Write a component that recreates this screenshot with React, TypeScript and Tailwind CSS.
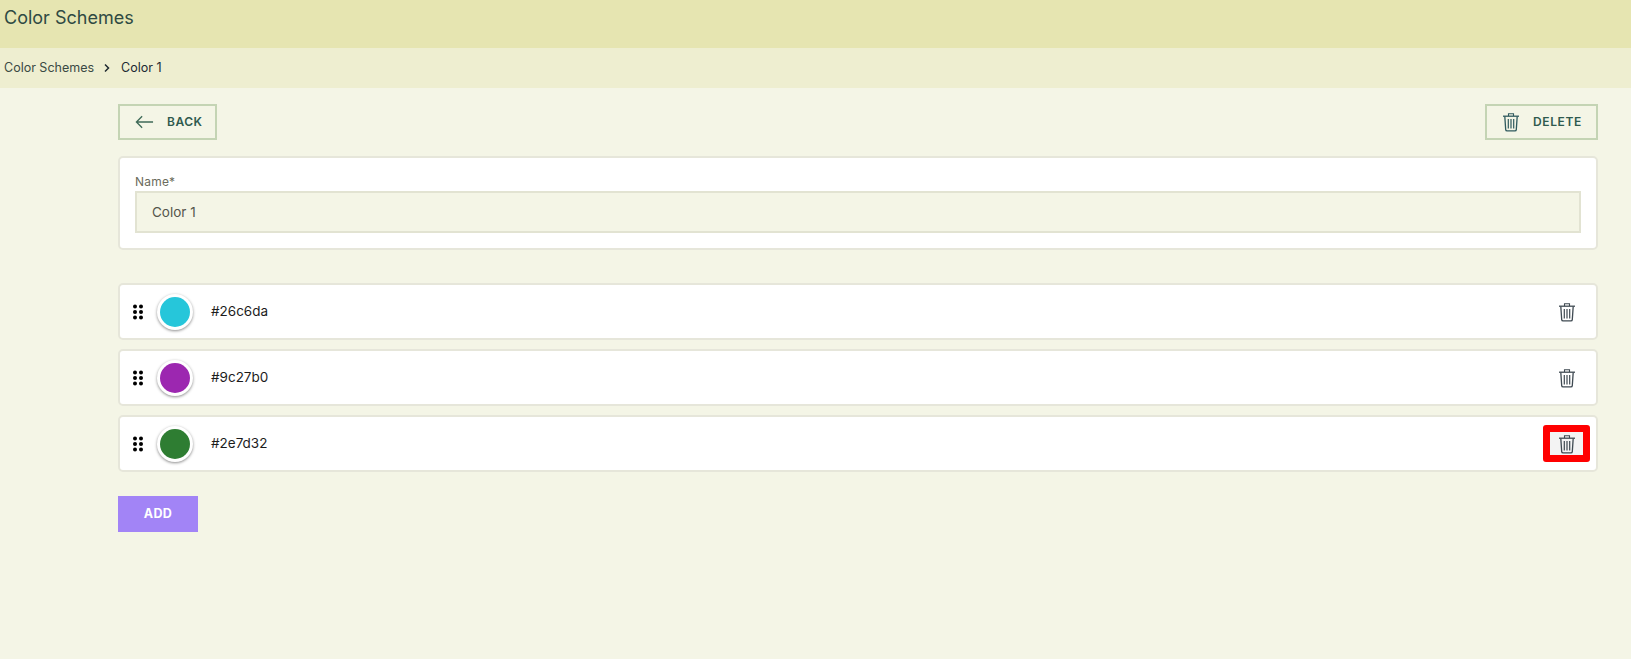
const font = { fontFamily: '' };
void font;

function Trash({ className, stroke }: { className: string; stroke: string }) {
  return (
    <svg viewBox="0 0 18 20" fill="none" stroke={stroke} className={className} strokeWidth="1.1">
      <path d="M1 4.2h16" strokeWidth="1.3" />
      <path d="M6.5 4V1.8h5V4" />
      <path d="M2.8 4.4l.9 13.2c.05.8.6 1.3 1.4 1.3h7.8c.8 0 1.35-.5 1.4-1.3l.9-13.2" strokeWidth="1.3" />
      <path d="M6.3 7v9.5M9 7v9.5M11.7 7v9.5" strokeWidth="1.2" />
    </svg>
  );
}

function Dots() {
  return (
    <svg viewBox="0 0 10 16" className="w-[10px] h-[16px]" fill="#000">
      <circle cx="2" cy="2.5" r="2" />
      <circle cx="8" cy="2.5" r="2" />
      <circle cx="2" cy="8" r="2" />
      <circle cx="8" cy="8" r="2" />
      <circle cx="2" cy="13.5" r="2" />
      <circle cx="8" cy="13.5" r="2" />
    </svg>
  );
}

function Row({ hex, highlight }: { hex: string; highlight?: boolean }) {
  return (
    <div className="h-[57px] bg-white border-2 border-[#e6e6da] rounded-[5px] flex items-center pl-[13px] pr-[6px]">
      <Dots />
      <div className="ml-[14px] w-[36px] h-[36px] rounded-full bg-white shadow-[0_1px_3px_rgba(0,0,0,0.45)] flex items-center justify-center">
        <div className="w-[30px] h-[30px] rounded-full" style={{ backgroundColor: hex }} />
      </div>
      <span className="ml-[18px] text-[13.5px] text-[#1c1c1c]">{hex}</span>
      <div className="ml-auto">
        {highlight ? (
          <div className="w-[47px] h-[37px] border-[7px] border-[#ff0000] rounded-[3px] bg-[#f3f3f3] flex items-center justify-center">
            <Trash className="w-[18px] h-[20px]" stroke="#3f4a52" />
          </div>
        ) : (
          <div className="w-[47px] h-[37px] flex items-center justify-center">
            <Trash className="w-[18px] h-[20px]" stroke="#3f4a52" />
          </div>
        )}
      </div>
    </div>
  );
}

export default function App() {
  return (
    <div className="min-h-[659px] bg-[#f4f5e6] font-['Inter',sans-serif]">
      <header className="h-[48px] bg-[#e6e5b1] pl-[4px] pt-[5px] text-[18px] leading-[26px] text-[#2f4a43]">
        Color Schemes
      </header>
      <nav className="h-[40px] bg-[#eeeed0] pl-[4px] flex items-center text-[12.5px] text-[#3a4a44]">
        <span>Color Schemes</span>
        <svg viewBox="0 0 10 10" className="w-[10px] h-[10px] ml-[8px] mr-[9px]" fill="none" stroke="#1f2a30" strokeWidth="1.5">
          <path d="M3 1.5L6.5 5L3 8.5" />
        </svg>
        <span className="text-[#1c2a33]">Color 1</span>
      </nav>
      <main className="ml-[118px] w-[1480px] pt-[16px]">
        <div className="flex justify-between">
          <button className="h-[36px] w-[99px] border-[2px] border-[#c4d4b4] flex items-center pl-[15px] text-[12px] font-semibold tracking-[0.5px] text-[#2f5a4e]">
            <svg viewBox="0 0 20 14" className="w-[19px] h-[14px]" fill="none" stroke="#3f6a58" strokeWidth="1.4">
              <path d="M19 7H1.5M7.5 1L1.5 7l6 6" />
            </svg>
            <span className="ml-[13px]">BACK</span>
          </button>
          <button className="h-[36px] w-[113px] border-[2px] border-[#c4d4b4] flex items-center pl-[15px] text-[12px] font-semibold tracking-[0.6px] text-[#2f5a4e]">
            <Trash className="w-[18px] h-[20px]" stroke="#2f5a5e" />
            <span className="ml-[13px]">DELETE</span>
          </button>
        </div>
        <section className="mt-[16px] h-[94px] bg-white border-2 border-[#e6e6da] rounded-[5px] px-[15px] pt-[15px]">
          <div className="text-[12px] leading-[18px] text-[#6b6b5c] tracking-[0.2px]">Name*</div>
          <div className="h-[42px] bg-[#f4f5e6] border-2 border-[#e2e3d2] flex items-center pl-[15px] text-[13.5px] text-[#55564c]">
            Color 1
          </div>
        </section>
        <div className="mt-[33px] flex flex-col gap-[9px]">
          <Row hex="#26c6da" />
          <Row hex="#9c27b0" />
          <Row hex="#2e7d32" highlight />
        </div>
        <button className="mt-[24px] w-[80px] h-[36px] bg-[#a284f6] text-white text-[12.5px] font-bold tracking-[0.3px] flex items-center justify-center">
          ADD
        </button>
      </main>
    </div>
  );
}
